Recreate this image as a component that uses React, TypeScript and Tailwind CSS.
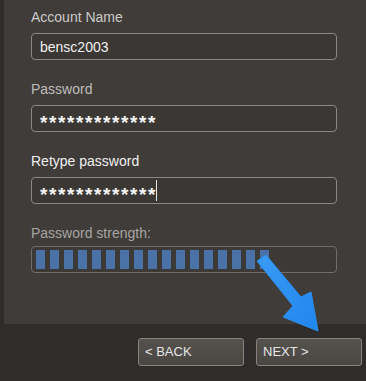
const font = { fontFamily: '"Liberation Sans", Arial, sans-serif' };

const Field = ({ label, value, labelClass, caret }: { label: string; value: string; labelClass: string; caret?: boolean }) => (
  <div className="flex flex-col">
    <div className={`h-4 text-[14px] leading-4 ${labelClass}`}>{label}</div>
    <div className="mt-2 h-[27px] rounded-[4px] border border-[#8a8784] bg-[#3a3734] pl-2 flex items-center">
      {value.startsWith('*') ? (
        <span className="text-[19px] font-bold leading-none tracking-[1.6px] text-[#f2f2f2] pt-[7px]">{value}</span>
      ) : (
        <span className="text-[14px] leading-none text-[#f0f0f0]">{value}</span>
      )}
      {caret && <span className="ml-[-1px] h-[21px] w-px bg-[#e8e8e8]" />}
    </div>
  </div>
);

const StrengthBar = ({ filled }: { filled: number }) => (
  <div className="flex flex-col">
    <div className="h-4 text-[14px] leading-4 text-[#a6a5a3]">Password strength:</div>
    <div className="mt-[5px] h-[27px] rounded-[4px] border border-[#6f6c69] bg-[#3c3936] pl-1 flex items-center gap-[5px]">
      {Array.from({ length: filled }).map((_, i) => (
        <div key={i} className="h-[19px] w-[9px] bg-[#4b72a6]" />
      ))}
    </div>
  </div>
);

const Button = ({ children }: { children: string }) => (
  <button className="h-[28px] w-[106px] rounded-[3px] border border-[#86837f] bg-gradient-to-b from-[#55524e] to-[#4a4743] pl-[6px] text-left text-[13px] text-[#e6e6e6]">
    {children}
  </button>
);

export default function App() {
  return (
    <div className="relative h-[381px] w-[366px] overflow-hidden bg-[#2f2d2b]" style={font}>
      <div className="ml-[4px] flex flex-col gap-[21px] bg-[#3f3c39] pt-[9px] pb-[51px] pl-[27px] pr-[29px]">
        <Field label="Account Name" value="bensc2003" labelClass="text-[#cbcac8]" />
        <Field label="Password" value="*************" labelClass="text-[#bebdbb]" />
        <Field label="Retype password" value="*************" labelClass="text-[#efefef]" caret />
        <StrengthBar filled={17} />
      </div>
      <div className="flex justify-end gap-3 pr-1 pt-[14px]">
        <Button>{'< BACK'}</Button>
        <Button>{'NEXT >'}</Button>
      </div>
      <svg className="pointer-events-none absolute left-0 top-0" width="366" height="381" viewBox="0 0 366 381">
        <defs>
          <linearGradient id="arrowFill" x1="0" y1="0" x2="1" y2="1">
            <stop offset="0" stopColor="#3a9bf5" />
            <stop offset="1" stopColor="#1f86ee" />
          </linearGradient>
        </defs>
        <polygon
          points="257,261 266,255 301,297 311,292 318,331 283,317 293,306"
          fill="url(#arrowFill)"
          stroke="#2a8ff0"
          strokeWidth="1"
          strokeLinejoin="round"
        />
      </svg>
    </div>
  );
}
